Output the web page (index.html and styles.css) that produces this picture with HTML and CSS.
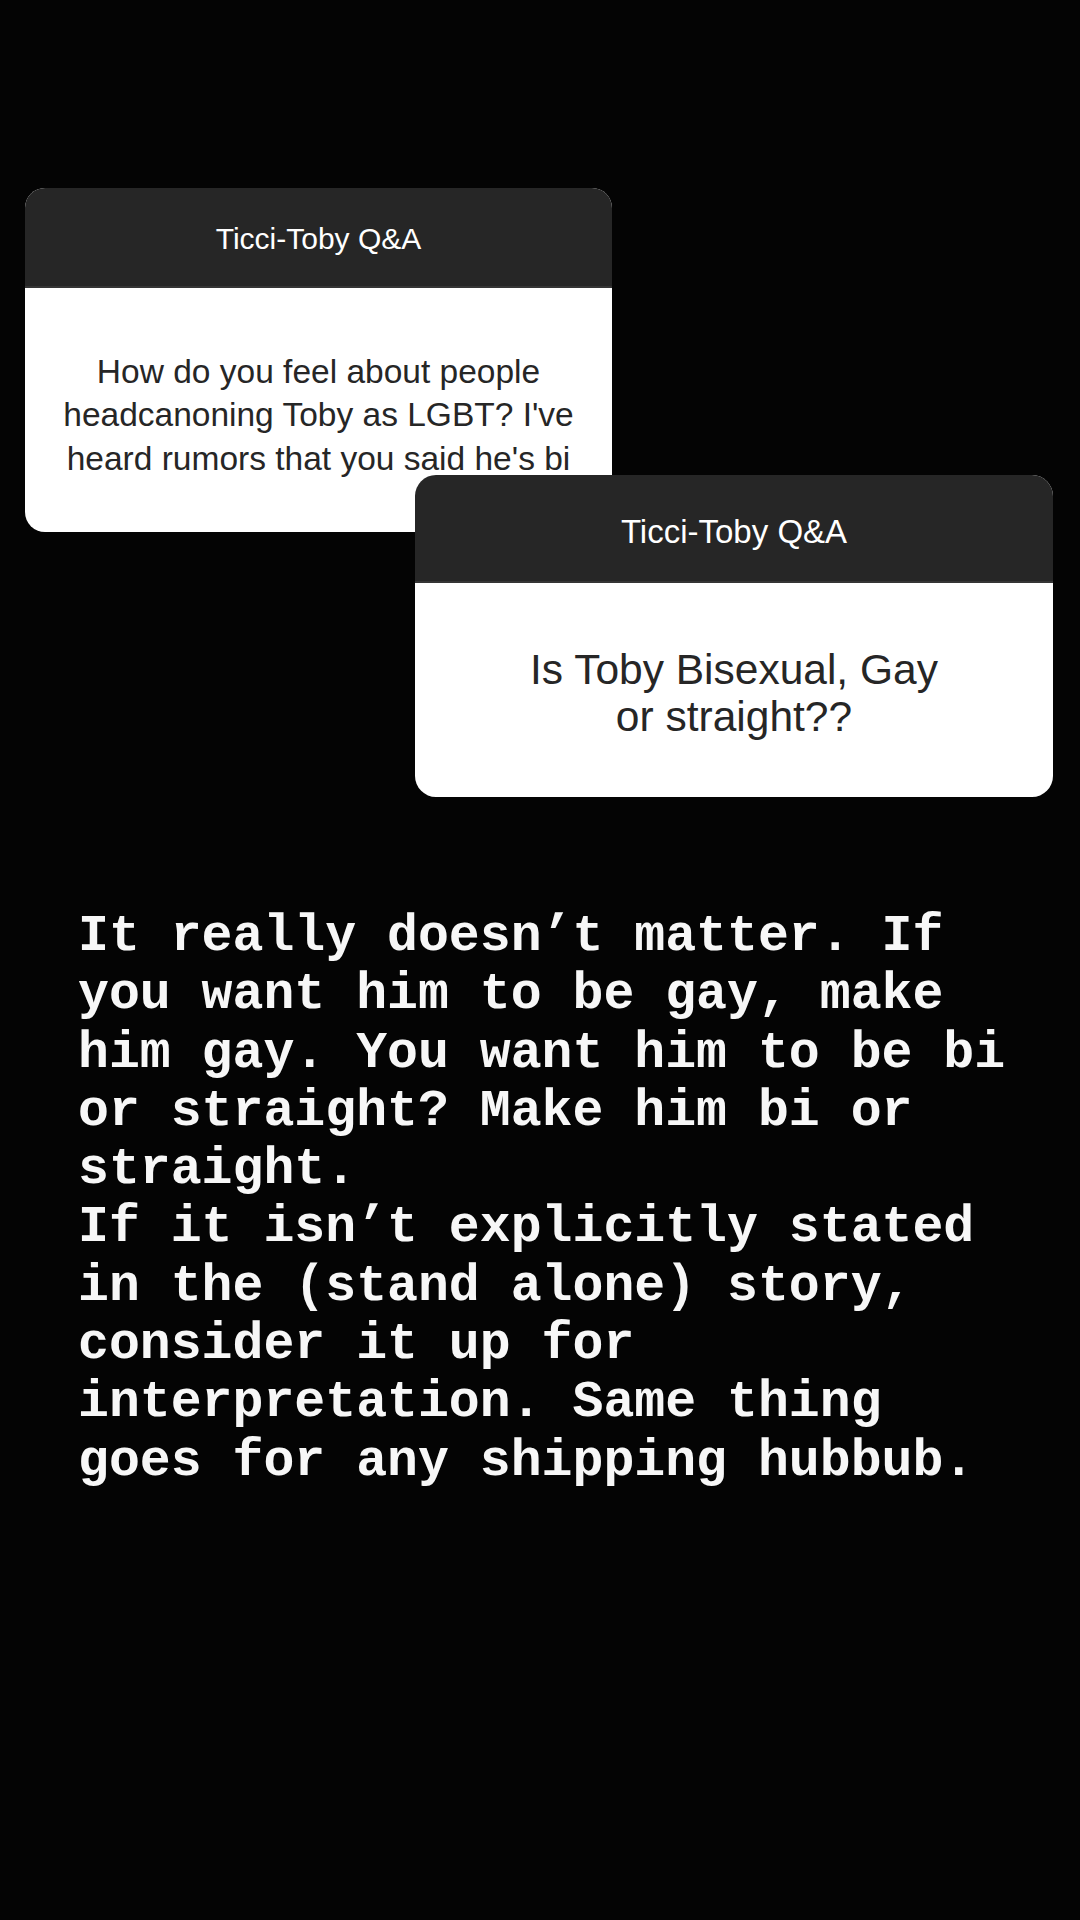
FILE: index.html
```html
<!DOCTYPE html>
<html lang="en">
<head>
<meta charset="utf-8">
<title>Ticci-Toby Q&amp;A</title>
<link rel="stylesheet" href="styles.css">
</head>
<body>
<main class="story">
  <section class="qa qa-one">
    <header class="qa-head">Ticci-Toby Q&amp;A</header>
    <div class="qa-body">How do you feel about people headcanoning Toby as LGBT? I've heard rumors that you said he's bi</div>
  </section>
  <section class="qa qa-two">
    <header class="qa-head">Ticci-Toby Q&amp;A</header>
    <div class="qa-body">Is Toby Bisexual, Gay<br>or straight??</div>
  </section>
  <div class="answer">
    <p>It really doesn’t matter. If you want him to be gay, make him gay. You want him to be bi or straight? Make him bi or straight.</p>
    <p>If it isn’t explicitly stated in the (stand alone) story, consider it up for interpretation. Same thing goes for any shipping hubbub.</p>
  </div>
</main>
</body>
</html>
```

FILE: styles.css
```css
html, body {
  margin: 0;
  padding: 0;
  background: #040404;
}

.story {
  width: 1080px;
  height: 1920px;
  background: #040404;
  display: flex;
  flex-direction: column;
  align-items: flex-start;
  padding-top: 188px;
  box-sizing: border-box;
  overflow: hidden;
}

.qa {
  display: flex;
  flex-direction: column;
  background: #ffffff;
  border-radius: 20px;
  overflow: hidden;
  font-family: "Liberation Sans", Arial, sans-serif;
  position: relative;
}

.qa-head {
  background: #262626;
  color: #ffffff;
  display: flex;
  align-items: center;
  justify-content: center;
  border-bottom: 2px solid #353535;
  box-sizing: border-box;
}

.qa-body {
  flex: 1;
  display: flex;
  align-items: center;
  justify-content: center;
  text-align: center;
  color: #262626;
}

.qa-one {
  margin-left: 25px;
  width: 587px;
  height: 344px;
}

.qa-one .qa-head {
  height: 100px;
  font-size: 30px;
  padding-top: 3px;
}

.qa-one .qa-body {
  font-size: 33.5px;
  line-height: 43.5px;
  padding: 10px 28px 0;
}

.qa-two {
  margin-left: 415px;
  margin-top: -57px;
  width: 638px;
  height: 322px;
  border-radius: 21px;
}

.qa-two .qa-head {
  height: 108px;
  font-size: 33px;
  padding-top: 8px;
}

.qa-two .qa-body {
  font-size: 42.5px;
  line-height: 47px;
  padding: 6px 40px 0;
}

.answer {
  margin-top: 110px;
  margin-left: 78px;
  font-family: "Liberation Mono", "Courier New", monospace;
  font-weight: bold;
  font-size: 51.5px;
  line-height: 58.3px;
  color: #f7f7f7;
  width: 30.5ch;
}

.answer p {
  margin: 0;
}
```
